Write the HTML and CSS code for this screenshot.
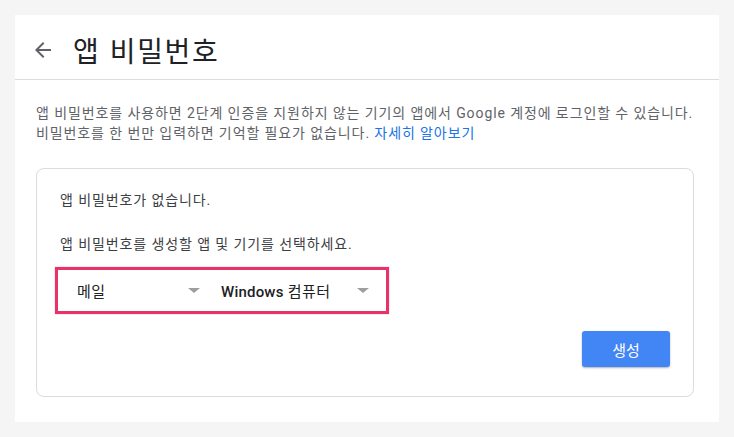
FILE: index.html
```html
<!DOCTYPE html>
<html lang="ko">
<head>
<meta charset="utf-8">
<title>앱 비밀번호</title>
<link rel="stylesheet" href="styles.css">
</head>
<body>
<div class="panel">
  <header class="header">
    <button class="back" aria-label="뒤로">
      <svg width="24" height="24" viewBox="0 0 24 24"><path d="M20 11H7.83l5.59-5.59L12 4l-8 8 8 8 1.41-1.41L7.83 13H20v-2z" fill="#5f6368"/></svg>
    </button>
    <h1 class="title">앱 비밀번호</h1>
  </header>
  <div class="content">
    <p class="desc">앱 비밀번호를 사용하면 2단계 인증을 지원하지 않는 기기의 앱에서 Google 계정에 로그인할 수 있습니다.<br>비밀번호를 한 번만 입력하면 기억할 필요가 없습니다. <a class="link" href="#">자세히 알아보기</a></p>
    <div class="card">
      <p class="line">앱 비밀번호가 없습니다.</p>
      <p class="line second">앱 비밀번호를 생성할 앱 및 기기를 선택하세요.</p>
      <div class="selects">
        <div class="dd dd-app"><span class="dd-label">메일</span><span class="caret"></span></div>
        <div class="dd dd-device"><span class="dd-label"><span class="latin">Windows</span> 컴퓨터</span><span class="caret"></span></div>
      </div>
      <div class="actions">
        <button class="btn">생성</button>
      </div>
    </div>
  </div>
</div>
</body>
</html>
```
FILE: styles.css
```css
* { box-sizing: border-box; }
html, body { margin: 0; padding: 0; }
body {
  background: #f5f5f5;
  font-family: Roboto, "Noto Sans CJK KR", sans-serif;
  width: 734px;
  height: 437px;
  overflow: hidden;
}
.panel {
  margin: 15px 0 0 15px;
  width: 704px;
  height: 407px;
  background: #fff;
}
.header {
  height: 65px;
  border-bottom: 1px solid #dadce0;
  display: flex;
  align-items: center;
  padding-left: 16px;
  padding-top: 5px;
}
.back {
  width: 24px;
  height: 24px;
  padding: 0;
  border: 0;
  background: none;
  display: flex;
}
.title {
  margin: 0 0 0 18px;
  font-family: "Noto Sans CJK KR", sans-serif;
  font-size: 28px;
  font-weight: 400;
  letter-spacing: 1.6px;
  color: #202124;
  line-height: 36px;
}
.content {
  padding: 23px 20px 0 21px;
}
.desc {
  margin: 0;
  font-size: 14px;
  line-height: 20px;
  letter-spacing: 0.9px;
  color: #5f6368;
  white-space: nowrap;
}
.link { color: #1a73e8; text-decoration: none; }
.card {
  margin-top: 25px;
  width: 658px;
  border: 1px solid #dadce0;
  border-radius: 8px;
  height: 229px;
  padding: 21px 23px 0 18px;
}
.line {
  margin: 0 0 0 5px;
  font-size: 14px;
  line-height: 20px;
  letter-spacing: 0.9px;
  color: #3c4043;
}
.line.second { margin-top: 24px; }
.selects {
  margin-top: 13px;
  width: 334px;
  height: 47px;
  border: 3px solid #e8336a;
  box-shadow: 0 0 1px rgba(232, 51, 106, 0.6);
  display: flex;
  align-items: center;
  padding-left: 19px;
}
.dd {
  display: flex;
  align-items: center;
  font-size: 15px;
  color: #202124;
}
.dd-app { width: 144px; padding-right: 21px; }
.dd-device { flex: 1; padding-right: 17px; }
.dd-label { flex: 1; font-weight: 400; letter-spacing: 0.4px; }
.latin { font-weight: 500; letter-spacing: 0.2px; }
.caret {
  width: 0;
  height: 0;
  border-left: 6px solid transparent;
  border-right: 6px solid transparent;
  border-top: 5px solid #9e9e9e;
}
.actions {
  display: flex;
  justify-content: flex-end;
  margin-top: 17px;
}
.btn {
  width: 88px;
  height: 36px;
  border: 0;
  border-radius: 3px;
  background: #4285f4;
  color: #fff;
  font-family: "Noto Sans CJK KR", sans-serif;
  font-size: 15px;
  box-shadow: 0 1px 2px rgba(0, 0, 0, 0.3);
}
```
